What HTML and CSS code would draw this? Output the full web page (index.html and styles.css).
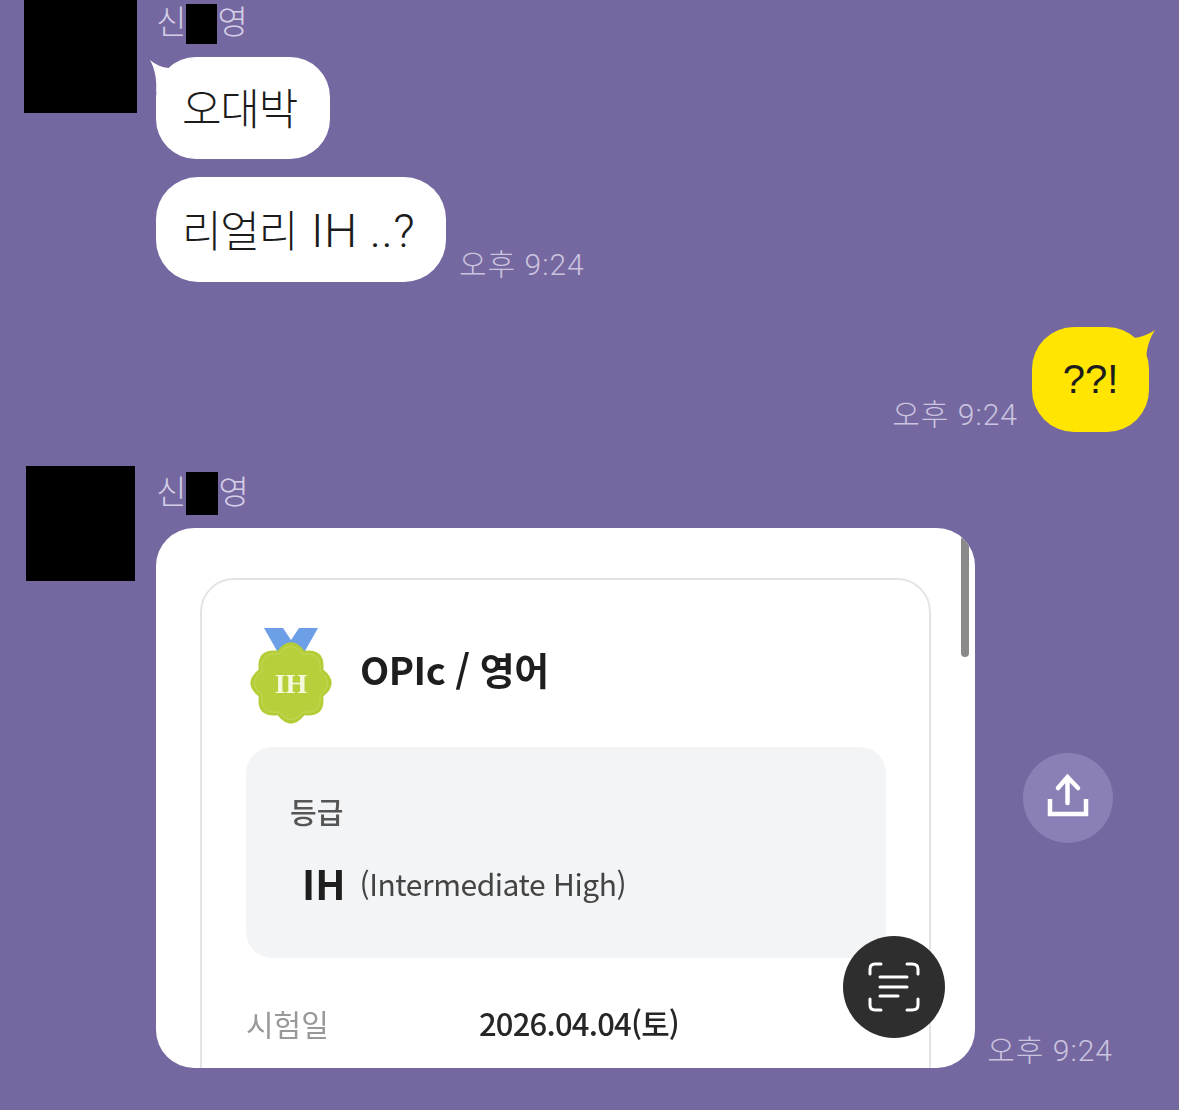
FILE: index.html
```html
<!DOCTYPE html>
<html lang="ko">
<head>
  <meta charset="UTF-8" />
  <title>채팅</title>
  <link rel="stylesheet" href="styles.css">
</head>
<body>
  <div class="chat">

    <!-- first incoming group -->
    <div class="row-in first">
      <div class="avatar"></div>
      <div class="msgs">
        <div class="name">신<span class="mask"></span>영</div>
        <div class="bubble white tall-a">
          <svg class="tail-left" width="26" height="36" viewBox="0 0 26 36"><path d="M0 0C5 4 12 8 19 8L24 12 6 32C7 20 5 9 0 0Z" fill="#fff"/></svg>
          <span>오대박</span>
        </div>
        <div class="line">
          <div class="bubble white tall-b"><span>리얼리 <span class="latin">IH ..?</span></span></div>
          <span class="time">오후 9:24</span>
        </div>
      </div>
    </div>

    <!-- my message -->
    <div class="row-out">
      <span class="time">오후 9:24</span>
      <div class="bubble yellow">
        <svg class="tail-right" width="26" height="36" viewBox="0 0 26 36"><path d="M26 0C20 4 11 8 4 8L0 12 17 32C17 20 20 9 26 0Z" fill="#ffe500"/></svg>
        <span class="latin">??!</span>
      </div>
    </div>

    <!-- second incoming group with picture -->
    <div class="row-in second">
      <div class="avatar small"></div>
      <div class="msgs">
        <div class="name name-b">신<span class="mask mask-b"></span>영</div>
        <div class="line">
          <div class="shot">
            <div class="card">
              <div class="card-head">
                <svg class="medal" width="84" height="98" viewBox="0 0 84 98">
                  <path d="M14 1H33L41 13 49 1H68L55 24H27Z" fill="#6c9fe6"/>
                  <path d="M54.4 23.7Q75.6 21.4 73.3 42.6 90 56 73.3 69.4 75.6 90.6 54.4 88.3 41 105 27.6 88.3 6.4 90.6 8.7 69.4-8 56 8.7 42.6 6.4 21.4 27.6 23.7 41 7 54.4 23.7Z" fill="#b4cc36"/>
                  <path d="M54.4 23.7Q75.6 21.4 73.3 42.6 90 56 73.3 69.4 75.6 90.6 54.4 88.3 41 105 27.6 88.3 6.4 90.6 8.7 69.4-8 56 8.7 42.6 6.4 21.4 27.6 23.7 41 7 54.4 23.7Z" fill="#b7cf3a" stroke="#c6da5e" stroke-width="1" transform="translate(4.1 5.6) scale(.9)"/>
                  <text x="41" y="66" class="medal-text" text-anchor="middle">IH</text>
                </svg>
                <div class="card-title">OPIc / 영어</div>
              </div>
              <div class="grade-box">
                <div class="grade-label">등급</div>
                <div class="grade-value"><b>IH</b><span>(Intermediate High)</span></div>
              </div>
              <div class="info-row">
                <span class="info-label">시험일</span>
                <span class="info-value">2026.04.04(토)</span>
              </div>
            </div>
            <div class="scrollbar"></div>
            <div class="scan">
              <svg width="102" height="102" viewBox="0 0 102 102" fill="none" stroke="#fff" stroke-width="3" stroke-linecap="round">
                <path d="M27 38V33Q27 28 32 28H38M64 28H69Q75 28 75 33V38M75 63V69Q75 74 69 74H64M38 74H32Q27 74 27 69V63"/>
                <path d="M37 41H64M37 51H64M37 60H55"/>
              </svg>
            </div>
          </div>
          <div class="side">
            <div class="share">
              <svg width="90" height="90" viewBox="0 0 90 90" fill="none" stroke="#fff" stroke-width="4.5">
                <path d="M44.5 50V24M35 35L44.5 24 55 35" stroke-linecap="round"/>
                <path d="M27 46V61H63V46"/>
              </svg>
            </div>
            <span class="time">오후 9:24</span>
          </div>
        </div>
      </div>
    </div>

  </div>
</body>
</html>
```

FILE: styles.css
```css
html, body {
  margin: 0;
  height: 1110px;
  overflow: hidden;
}
body {
  background: #7568a1;
  font-family: "Liberation Sans", "Noto Sans CJK KR", sans-serif;
  color: #1c1c1c;
}
.chat {
  display: flex;
  flex-direction: column;
}
.row-in {
  display: flex;
  align-items: flex-start;
}
.row-in.first {
  padding-left: 24px;
  gap: 19px;
}
.row-in.second {
  padding-left: 26px;
  gap: 21px;
  margin-top: 34px;
}
.avatar {
  width: 113px;
  height: 113px;
  background: #000;
  flex: none;
}
.avatar.small {
  width: 109px;
  height: 115px;
}
.msgs {
  display: flex;
  flex-direction: column;
}
.name {
  box-sizing: border-box;
  display: flex;
  align-items: center;
  height: 45px;
  padding-bottom: 4px;
  margin-bottom: 12px;
  font-family: "Noto Sans CJK KR", sans-serif;
  font-weight: 300;
  font-size: 33px;
  line-height: 41px;
  color: #d5cfe6;
}
.name-b {
  height: 52px;
  margin-bottom: 10px;
}
.mask {
  width: 31px;
  height: 40px;
  margin-top: 6px;
  background: #000;
}
.mask-b {
  width: 32px;
  height: 43px;
}
.bubble {
  position: relative;
  box-sizing: border-box;
  display: flex;
  align-items: center;
  font-family: "Noto Sans CJK KR", sans-serif;
  font-weight: 300;
  font-size: 43px;
  letter-spacing: -1.2px;
  white-space: nowrap;
}
.white {
  background: #fff;
  padding-left: 26px;
  padding-bottom: 4px;
}
.tall-a {
  width: 174px;
  height: 102px;
  border-radius: 40px;
  margin-bottom: 18px;
}
.tall-b {
  width: 290px;
  height: 105px;
  border-radius: 42px;
}
.latin {
  font-family: "Liberation Sans", sans-serif;
  font-weight: 400;
  letter-spacing: 0;
}
.tall-b .latin {
  font-family: Roboto, sans-serif;
  font-weight: 300;
  font-size: 47px;
  letter-spacing: 0.5px;
  margin-left: 3px;
}
.yellow {
  background: #ffe500;
  width: 117px;
  height: 105px;
  border-radius: 42px;
  justify-content: center;
}
.yellow .latin {
  font-size: 40px;
}
.tail-left {
  position: absolute;
  left: -6px;
  top: 3px;
}
.tail-right {
  position: absolute;
  right: -6px;
  top: 3px;
}
.line {
  display: flex;
  align-items: flex-end;
}
.time {
  font-family: Roboto, "Noto Sans CJK KR", sans-serif;
  font-weight: 300;
  font-size: 30px;
  line-height: 34px;
  letter-spacing: 1px;
  color: #cbc4df;
  white-space: nowrap;
}
.line > .time {
  margin-left: 13px;
}
.row-out {
  display: flex;
  justify-content: flex-end;
  align-items: flex-end;
  gap: 14px;
  margin-top: 45px;
  padding-right: 30px;
}
.shot {
  position: relative;
  box-sizing: border-box;
  width: 819px;
  height: 540px;
  flex: none;
  background: #fff;
  border-radius: 38px;
  overflow: hidden;
  padding: 50px 44px 0;
}
.card {
  box-sizing: border-box;
  width: 731px;
  height: 560px;
  border: 2px solid #e4e4e8;
  border-radius: 34px;
  padding: 47px 44px 0;
  filter: blur(0.4px);
}
.card-head {
  display: flex;
  align-items: center;
  gap: 26px;
  margin-left: 4px;
  height: 98px;
  margin-bottom: 22px;
}
.medal {
  flex: none;
}
.medal-text {
  font-family: "Liberation Serif", serif;
  font-weight: 700;
  font-size: 28px;
  fill: #f6f8dc;
}
.card-title {
  font-family: "Noto Sans CJK KR", sans-serif;
  font-weight: 700;
  font-size: 38px;
  letter-spacing: -0.5px;
  color: #1e1e1e;
  padding-bottom: 16px;
}
.grade-box {
  box-sizing: border-box;
  width: 640px;
  height: 211px;
  background: #f3f4f6;
  border-radius: 26px;
  padding: 42px 44px 0;
}
.grade-label {
  font-family: "Noto Sans CJK KR", sans-serif;
  font-weight: 500;
  font-size: 29px;
  line-height: 44px;
  color: #555;
}
.grade-value {
  display: flex;
  align-items: center;
  gap: 14px;
  margin-top: 20px;
  padding-left: 12px;
  font-family: "Noto Sans CJK KR", sans-serif;
  color: #444;
}
.grade-value b {
  font-size: 40px;
  line-height: 60px;
  color: #1e1e1e;
}
.grade-value span {
  font-size: 30px;
  letter-spacing: -0.45px;
}
.info-row {
  display: flex;
  align-items: center;
  margin-top: 42px;
  font-family: "Noto Sans CJK KR", sans-serif;
}
.info-label {
  width: 233px;
  font-size: 30px;
  color: #999;
}
.info-value {
  font-weight: 500;
  font-size: 31px;
  letter-spacing: -0.8px;
  color: #262626;
}
.scrollbar {
  position: absolute;
  top: 8px;
  right: 6px;
  width: 8px;
  height: 121px;
  background: #8a8a8a;
  border-radius: 4px;
}
.scan {
  position: absolute;
  left: 687px;
  top: 408px;
  width: 102px;
  height: 102px;
  background: #2e2e2e;
  border-radius: 50%;
}
.scan svg, .share svg {
  display: block;
}
.side {
  display: flex;
  flex-direction: column;
  align-items: flex-end;
  width: 138px;
}
.share {
  width: 90px;
  height: 90px;
  border-radius: 50%;
  background: #8b80b6;
  margin-bottom: 191px;
}
```
